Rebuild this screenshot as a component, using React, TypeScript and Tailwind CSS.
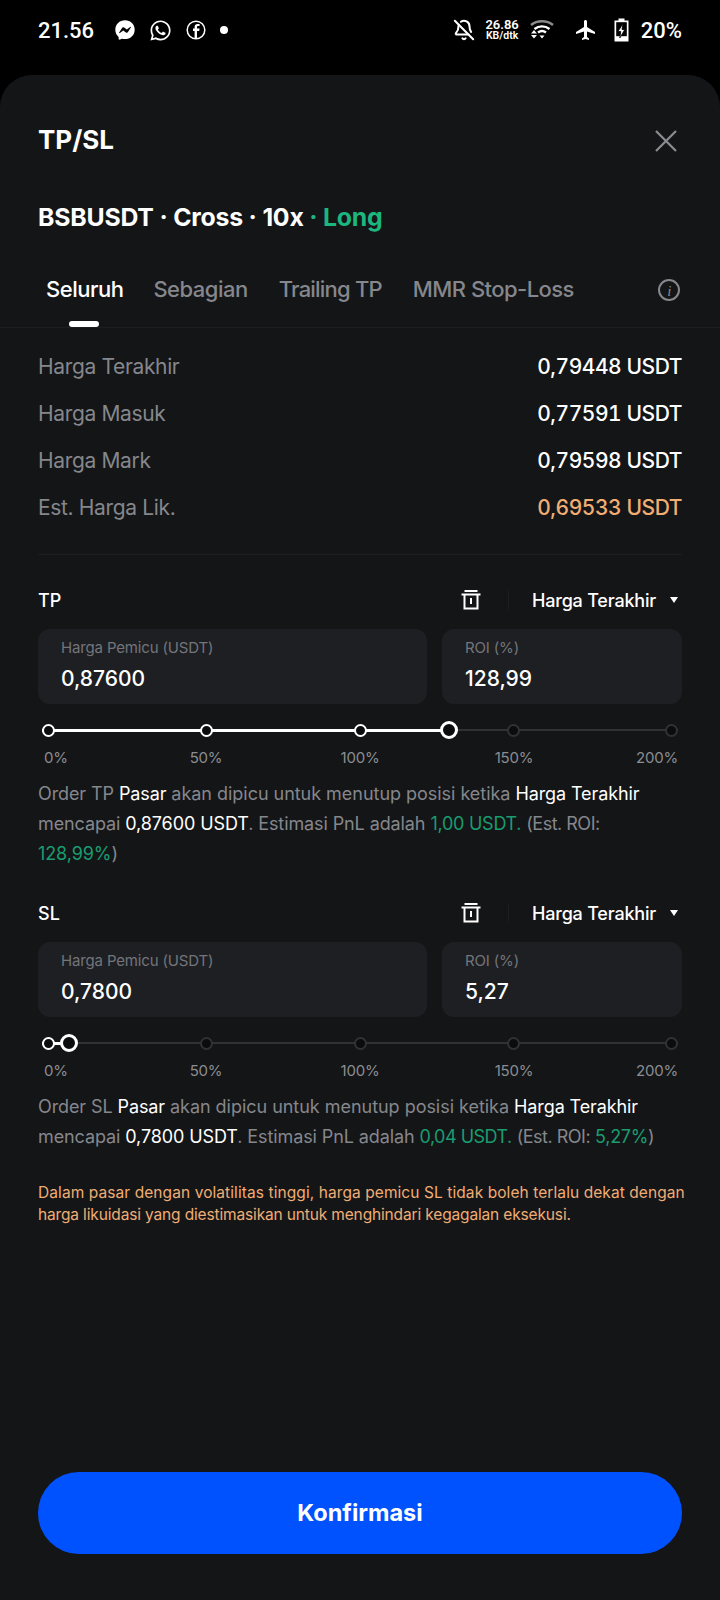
import { BellOff } from "lucide-react";
import { FaFacebookMessenger, FaWhatsapp } from "react-icons/fa";
import { MdFlight } from "react-icons/md";

const ticks = ["0%", "50%", "100%", "150%", "200%"];
// the ticks in the screenshot are not evenly spaced
const tickNudge = ["", "left-[2px]", "", "left-[-2px]", ""];

function FacebookIcon() {
  return (
    <svg width="20" height="20" viewBox="0 0 20 20" fill="none">
      <circle cx="10" cy="10" r="8.8" stroke="white" strokeWidth="1.5" />
      <path
        d="M11 18v-7h2.2l.4-2.4H11V7.2c0-.8.3-1.2 1.2-1.2h1.4V4h-2c-2 0-3 1.1-3 3v1.6H7V11h1.6v7"
        fill="white"
      />
    </svg>
  );
}

function WifiIcon() {
  return (
    <svg width="24" height="22" viewBox="0 0 24 22" fill="none">
      <path d="M1 6C7 1 17 1 23 6" stroke="#8a8a8a" strokeWidth="2.400" />
      <path d="M4.500 10C9 6.500 15 6.500 19.500 10" stroke="white" strokeWidth="2.400" />
      <path d="M8 13.500C10.500 11.500 13.500 11.500 16 13.500" stroke="white" strokeWidth="2.400" />
      <path d="M1 13.500h6l-3 -3.500zM1 15h6l-3 3.500z" fill="white" transform="translate(0 1)" />
      <path d="M9.500 16.500h5l-2.500 3z" fill="white" />
    </svg>
  );
}

function BatteryIcon() {
  return (
    <svg width="15" height="24" viewBox="0 0 15 24" fill="none">
      <path d="M4.500 0.500h6v2h4v21H0.500v-21h4z" fill="white" />
      <rect x="2.200" y="4.200" width="10.600" height="14" fill="black" />
      <path d="M9 5.500 4 13.500h2.800l-1 6.500 5-8.500H8z" fill="white" stroke="black" strokeWidth="0.800" />
    </svg>
  );
}

function TrashIcon() {
  return (
    <svg width="20" height="20" viewBox="0 0 20 20" fill="none" stroke="white" strokeWidth="2">
      <path d="M0.500 4.500h19" />
      <path d="M3.500 1h13" />
      <path d="M3.500 4.500v14h13v-14" />
      <path d="M10 8v6" />
    </svg>
  );
}

function Slider({ fill, handle, active }: { fill: string; handle: string; active: number }) {
  return (
    <div className="mx-[42px] mt-[18px]">
      <div className="relative flex h-4 items-center justify-between">
        <div className="absolute inset-x-0 top-[7px] h-[2px] bg-[#303236]" />
        <div className={`absolute left-0 top-[6.500px] h-[3px] bg-white ${fill}`} />
        {ticks.map((t, i) => (
          <span
            key={t}
            className={`relative h-[13px] w-[13px] rounded-full border-2 bg-[#0b0c0e] ${tickNudge[i]} ${
              i < active ? "border-white" : "border-[#303236]"
            }`}
          />
        ))}
        <span
          className={`absolute top-[-1px] h-[18px] w-[18px] rounded-full border-[3px] border-white bg-[#0b0c0e] ${handle}`}
        />
      </div>
      <div className="mt-[11px] flex justify-between px-[6px] text-[15px] leading-[18px] tracking-[-0.2px] text-[#8b8d92]">
        {ticks.map((t, i) => (
          <span
            key={t}
            className={`relative flex w-0 whitespace-nowrap ${tickNudge[i]} ${
              i === 0
                ? "-translate-x-[4px] justify-start"
                : i === 4
                  ? "translate-x-[6px] justify-end"
                  : "justify-center"
            }`}
          >
            {t}
          </span>
        ))}
      </div>
    </div>
  );
}

function OrderBlock({
  label,
  price,
  roi,
  fill,
  handle,
  active,
  children,
}: {
  label: string;
  price: string;
  roi: string;
  fill: string;
  handle: string;
  active: number;
  children: React.ReactNode;
}) {
  return (
    <section>
      <div className="flex h-6 items-center px-[38px]">
        <span className="text-[18px] font-medium text-white">{label}</span>
        <div className="ml-auto mr-[27px]">
          <TrashIcon />
        </div>
        <span className="h-5 w-px bg-[#1c1d20]" />
        <span className="ml-[23px] w-[124px] whitespace-nowrap text-[18px] font-medium tracking-[-0.2px] text-white">
          Harga Terakhir
        </span>
        <span className="ml-[14px] mr-[4px] h-0 w-0 border-x-[4px] border-t-[6px] border-x-transparent border-t-white" />
      </div>
      <div className="mt-[17px] flex gap-[15px] px-[38px]">
        <div className="h-[75px] w-[389px] rounded-xl bg-[#1e1f23] pl-[23px] pt-[9px]">
          <div className="text-[15px] leading-[20px] tracking-[-0.15px] text-[#73757a]">Harga Pemicu (USDT)</div>
          <div className="mt-[6px] text-[21px] font-medium leading-[30px] text-white">{price}</div>
        </div>
        <div className="h-[75px] flex-1 rounded-xl bg-[#1e1f23] pl-[23px] pt-[9px]">
          <div className="text-[15px] leading-[20px] tracking-[-0.15px] text-[#73757a]">ROI (%)</div>
          <div className="mt-[6px] text-[21px] font-medium leading-[30px] text-white">{roi}</div>
        </div>
      </div>
      <Slider fill={fill} handle={handle} active={active} />
      <p className="mt-[12px] px-[38px] text-[18px] leading-[30px] tracking-[-0.1px] text-[#85878c]">{children}</p>
    </section>
  );
}

function InfoRow({ label, value, valueClass }: { label: string; value: string; valueClass: string }) {
  return (
    <div className="flex h-[47px] items-center justify-between">
      <span className="text-[21px] tracking-[-0.35px] text-[#85878c]">{label}</span>
      <span className={`text-[21px] font-medium tabular-nums tracking-[-0.45px] ${valueClass}`}>{value}</span>
    </div>
  );
}

export default function App() {
  return (
    <div className="flex h-[1600px] w-[720px] flex-col overflow-hidden bg-black font-['Inter',sans-serif]">
      <header className="flex h-[75px] shrink-0 items-center px-[38px] pb-[15px] font-['Roboto',sans-serif] text-white">
        <span className="text-[22px] font-medium">21.56</span>
        <FaFacebookMessenger className="ml-[21px] text-[20px]" />
        <FaWhatsapp className="ml-[14px] text-[23px]" />
        <div className="ml-[14px]">
          <FacebookIcon />
        </div>
        <span className="ml-[14px] h-2 w-2 rounded-full bg-white" />
        <BellOff className="ml-auto" size={22} strokeWidth={2.200} />
        <div className="ml-[10px] flex flex-col items-center font-semibold leading-[11px]">
          <span className="text-[13px]">26.86</span>
          <span className="text-[10.500px]">KB/dtk</span>
        </div>
        <div className="ml-[11px]">
          <WifiIcon />
        </div>
        <MdFlight className="ml-[20px] text-[24px]" />
        <div className="ml-[16px]">
          <BatteryIcon />
        </div>
        <span className="ml-[12px] text-[22px] font-medium">20%</span>
      </header>

      <main className="flex flex-1 flex-col rounded-t-[32px] bg-[#141517]">
        <div className="flex h-[136px] shrink-0 flex-col px-[38px]">
          <div className="mt-[45px] flex h-10 items-center justify-between">
            <h1 className="text-[26px] font-bold text-white">TP/SL</h1>
            <svg width="24" height="24" viewBox="0 0 24 24" stroke="#8b8d92" strokeWidth="2.200" className="mr-[4px] mt-[2px]">
              <path d="M2 2l20 20M22 2L2 22" />
            </svg>
          </div>
          <div className="mt-[43px] text-[24.800px] font-bold leading-[30px] tracking-[-0.2px] text-white">
            BSBUSDT · Cross · 10x <span className="text-[#1cb67f]">· Long</span>
          </div>
        </div>

        <nav className="relative mt-[61px] flex h-[56px] shrink-0 border-b border-[#1d1e21] pl-[46px] pr-[38px] pt-[1px] text-[22px] font-medium tracking-[-0.5px] text-[#85878c]">
          <div className="relative">
            <span className="text-white">Seluruh</span>
            <span className="absolute left-[23px] top-[48px] h-[6px] w-[30px] rounded-full bg-white" />
          </div>
          <span className="ml-[30px]">Sebagian</span>
          <span className="ml-[31px] tracking-[-0.8px]">Trailing TP</span>
          <span className="ml-[31px] tracking-[-0.55px]">MMR Stop-Loss</span>
          <svg width="24" height="24" viewBox="0 0 24 24" fill="none" className="ml-auto mr-[1px] mt-[5px]">
            <circle cx="12" cy="12" r="10" stroke="#85878c" strokeWidth="2" />
            <text x="12" y="17.500" fontSize="15" fontStyle="italic" fontFamily="Liberation Serif, serif" textAnchor="middle" fill="#85878c">
              i
            </text>
          </svg>
        </nav>

        <div className="mx-[38px] border-b border-[#1d1e21] pb-[23px] pt-[15px]">
          <InfoRow label="Harga Terakhir" value="0,79448 USDT" valueClass="text-white" />
          <InfoRow label="Harga Masuk" value="0,77591 USDT" valueClass="text-white" />
          <InfoRow label="Harga Mark" value="0,79598 USDT" valueClass="text-white" />
          <InfoRow label="Est. Harga Lik." value="0,69533 USDT" valueClass="text-[#f0ad74]" />
        </div>

        <div className="mt-[33px]">
          <OrderBlock label="TP" price="0,87600" roi="128,99" fill="w-[400px]" handle="left-[398px]" active={3}>
            Order TP <span className="text-white">Pasar</span>{" "}
            <span className="tracking-[-0.03px]">akan dipicu untuk menutup posisi ketika</span>{" "}
            <span className="text-white">Harga Terakhir</span> mencapai <span className="text-white">0,87600 USDT</span>.
            Estimasi PnL adalah <span className="tracking-[-0.25px] text-[#1a9c70]">1,00 USDT.</span>{" "}
            <span className="tracking-[-0.5px]">(Est. ROI:</span> <span className="text-[#1a9c70]">128,99%</span>)
          </OrderBlock>
        </div>

        <div className="mt-[32px]">
          <OrderBlock label="SL" price="0,7800" roi="5,27" fill="w-[20px]" handle="left-[18px]" active={1}>
            Order SL <span className="text-white">Pasar</span>{" "}
            <span className="tracking-[-0.03px]">akan dipicu untuk menutup posisi ketika</span>{" "}
            <span className="text-white">Harga Terakhir</span> mencapai <span className="text-white">0,7800 USDT</span>.
            Estimasi PnL adalah <span className="tracking-[-0.5px] text-[#1a9c70]">0,04 USDT.</span>{" "}
            <span className="tracking-[-0.5px]">(Est. ROI:</span>{" "}
            <span className="tracking-[-0.3px] text-[#1a9c70]">5,27%</span>)
          </OrderBlock>
        </div>

        <p className="mt-[30px] pl-[38px] pr-[30px] text-[15.500px] leading-[22px] tracking-[0.08px] text-[#f0ad74]">
          Dalam pasar dengan volatilitas tinggi, harga pemicu SL tidak boleh terlalu dekat dengan{" "}
          <span className="tracking-[-0.15px]">
            harga likuidasi yang diestimasikan untuk menghindari kegagalan eksekusi.
          </span>
        </p>

        <div className="mt-auto px-[38px] pb-[46px]">
          <button className="h-[82px] w-full rounded-full bg-[#0052ff] text-[23.500px] font-bold text-white">
            Konfirmasi
          </button>
        </div>
      </main>
    </div>
  );
}
